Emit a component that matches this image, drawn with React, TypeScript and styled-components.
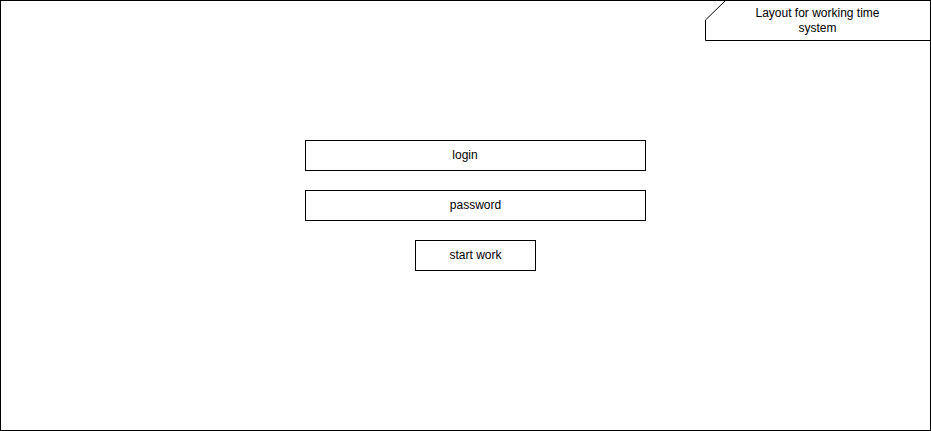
import React from "react";
import styled, { createGlobalStyle } from "styled-components";

const Global = createGlobalStyle`
  html, body { margin: 0; padding: 0; background: #fff; }
  body { font-family: "Liberation Sans", Arial, Helvetica, sans-serif; }
  * { box-sizing: border-box; }
`;

const Frame = styled.div`
  width: 931px;
  height: 431px;
  border: 1px solid #000;
  background: #fff;
  display: flex;
  flex-direction: column;
`;

const Header = styled.div`
  display: flex;
  justify-content: flex-end;
`;

const Tag = styled.div`
  position: relative;
  width: 225px;
  height: 40px;
  display: flex;
  align-items: center;
  justify-content: center;
  text-align: center;
  font-size: 12px;
  line-height: 15px;
  color: #000;
  padding: 0 44px 1px 44px;
`;

const TagOutline = styled.svg`
  position: absolute;
  left: 0;
  top: 0;
  width: 225px;
  height: 40px;
  pointer-events: none;
`;

const Form = styled.div`
  margin-top: 99px;
  margin-left: 304px;
  width: 341px;
  display: flex;
  flex-direction: column;
  align-items: center;
  gap: 19px;
`;

const Field = styled.div<{ $w: number; $shift?: number }>`
  width: ${(p) => p.$w}px;
  height: 31px;
  border: 1px solid #000;
  display: flex;
  align-items: center;
  justify-content: center;
  font-size: 12px;
  color: #000;
  padding-bottom: 2px;
  padding-right: ${(p) => p.$shift ?? 0}px;
`;

export default function App() {
  return (
    <>
      <Global />
      <Frame>
        <Header>
          <Tag>
            <TagOutline viewBox="0 0 225 40">
              <polyline
                points="225,39.5 0.5,39.5 0.5,19 20,0"
                fill="none"
                stroke="#000"
                strokeWidth="1"
              />
            </TagOutline>
            Layout for working time system
          </Tag>
        </Header>
        <Form>
          <Field $w={341} $shift={21}>login</Field>
          <Field $w={341}>password</Field>
          <Field $w={121}>start work</Field>
        </Form>
      </Frame>
    </>
  );
}
